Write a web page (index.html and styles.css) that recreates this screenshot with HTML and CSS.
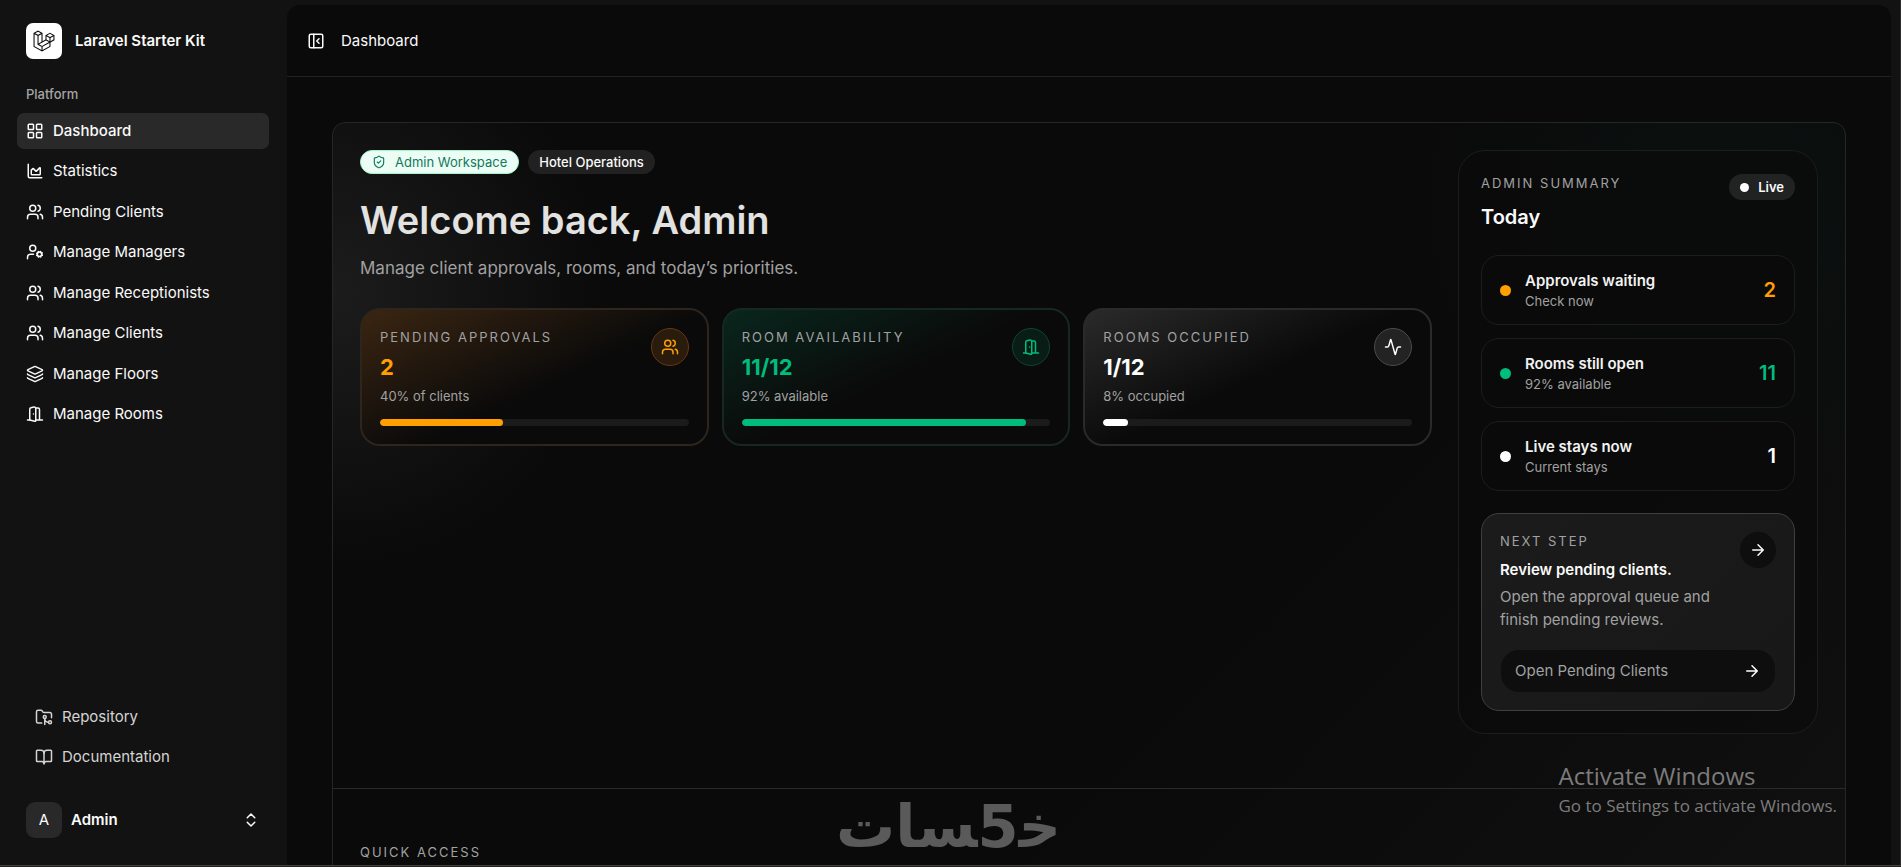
FILE: index.html
```html
<!DOCTYPE html>
<html lang="en">
<head>
<meta charset="utf-8">
<meta name="viewport" content="width=device-width, initial-scale=1">
<title>Dashboard - Laravel Starter Kit</title>
<link rel="stylesheet" href="styles.css">
</head>
<body>
<svg class="sprite" aria-hidden="true">
  <symbol id="grid" viewBox="0 0 24 24"><rect x="3" y="3" width="7" height="7" rx="1"/><rect x="14" y="3" width="7" height="7" rx="1"/><rect x="14" y="14" width="7" height="7" rx="1"/><rect x="3" y="14" width="7" height="7" rx="1"/></symbol>
  <symbol id="chart" viewBox="0 0 24 24"><path d="M3 3v16a2 2 0 0 0 2 2h16"/><path d="M7 11.207a.5.5 0 0 1 .146-.353l2-2a.5.5 0 0 1 .708 0l3.292 3.292a.5.5 0 0 0 .708 0l4.292-4.292a.5.5 0 0 1 .854.353V16a1 1 0 0 1-1 1H8a1 1 0 0 1-1-1z"/></symbol>
  <symbol id="users" viewBox="0 0 24 24"><path d="M16 21v-2a4 4 0 0 0-4-4H6a4 4 0 0 0-4 4v2"/><circle cx="9" cy="7" r="4"/><path d="M22 21v-2a4 4 0 0 0-3-3.87"/><path d="M16 3.13a4 4 0 0 1 0 7.75"/></symbol>
  <symbol id="user-cog" viewBox="0 0 24 24"><circle cx="18" cy="15" r="3"/><circle cx="9" cy="7" r="4"/><path d="M10 15H6a4 4 0 0 0-4 4v2"/><path d="m21.7 16.4-.9-.3M15.2 13.9l-.9-.3M16.6 18.7l.3-.9M19.1 12.2l.3-.9M19.6 18.7l-.4-1M16.8 12.3l-.4-1M14.3 16.6l1-.4M20.7 13.8l1-.4"/></symbol>
  <symbol id="layers" viewBox="0 0 24 24"><path d="M12.83 2.18a2 2 0 0 0-1.66 0L2.6 6.08a1 1 0 0 0 0 1.83l8.58 3.91a2 2 0 0 0 1.66 0l8.58-3.9a1 1 0 0 0 0-1.83z"/><path d="M2 12a1 1 0 0 0 .58.91l8.6 3.91a2 2 0 0 0 1.65 0l8.58-3.9A1 1 0 0 0 22 12"/><path d="M2 17a1 1 0 0 0 .58.91l8.6 3.91a2 2 0 0 0 1.65 0l8.58-3.9A1 1 0 0 0 22 17"/></symbol>
  <symbol id="door" viewBox="0 0 24 24"><path d="M13 4h3a2 2 0 0 1 2 2v14M2 20h3M13 20h9M10 12v.01"/><path d="M13 4.562v16.157a1 1 0 0 1-1.242.97L5 20V5.562a2 2 0 0 1 1.515-1.94l4-1A2 2 0 0 1 13 4.561Z"/></symbol>
  <symbol id="repo" viewBox="0 0 24 24"><path d="M9 20H4a2 2 0 0 1-2-2V5a2 2 0 0 1 2-2h3.9a2 2 0 0 1 1.69.9l.81 1.2a2 2 0 0 0 1.67.9H20a2 2 0 0 1 2 2v5"/><circle cx="13" cy="12" r="2"/><path d="M18 19c-2.8 0-5-2.2-5-5v8"/><circle cx="20" cy="19" r="2"/></symbol>
  <symbol id="book" viewBox="0 0 24 24"><path d="M12 7v14"/><path d="M3 18a1 1 0 0 1-1-1V4a1 1 0 0 1 1-1h5a4 4 0 0 1 4 4 4 4 0 0 1 4-4h5a1 1 0 0 1 1 1v13a1 1 0 0 1-1 1h-6a3 3 0 0 0-3 3 3 3 0 0 0-3-3z"/></symbol>
  <symbol id="updown" viewBox="0 0 24 24"><path d="m7 15 5 5 5-5M7 9l5-5 5 5"/></symbol>
  <symbol id="panel" viewBox="0 0 24 24"><rect x="3" y="3" width="18" height="18" rx="2"/><path d="M9 3v18M16 15l-3-3 3-3"/></symbol>
  <symbol id="arrow" viewBox="0 0 24 24"><path d="M5 12h14M12 5l7 7-7 7"/></symbol>
  <symbol id="activity" viewBox="0 0 24 24"><path d="M22 12h-2.48a2 2 0 0 0-1.93 1.46l-2.35 8.36a.25.25 0 0 1-.48 0L9.24 2.18a.25.25 0 0 0-.48 0l-2.35 8.36A2 2 0 0 1 4.49 12H2"/></symbol>
  <symbol id="shield" viewBox="0 0 24 24"><path d="M20 13c0 5-3.5 7.5-7.66 8.95a1 1 0 0 1-.67-.01C7.5 20.5 4 18 4 13V6a1 1 0 0 1 1-1c2 0 4.500-1.200 6.240-2.720a1.170 1.170 0 0 1 1.520 0C14.510 3.810 17 5 19 5a1 1 0 0 1 1 1z"/><path d="m9 12 2 2 4-4"/></symbol>
</svg>

<div class="app">
  <aside class="sidebar">
    <a class="brand" href="#">
      <span class="brand-mark"><svg viewBox="0 0 40 42" aria-hidden="true"><path fill="currentColor" fill-rule="evenodd" d="M17.2 5.633 8.6.855 0 5.633v26.51l16.2 9 16.2-9v-8.444l7.6-4.222V9.856l-8.6-4.778-8.6 4.778V18.300l-5.600 3.111V5.633ZM38 18.300l-5.600 3.111v-6.157L38 12.143V18.300Zm-1.059-7.856-5.541 3.078-5.541-3.078 5.541-3.078 5.541 3.078ZM24.800 18.300v-6.157l5.600 3.111v6.157l-5.600-3.111Zm-1 1.732 5.541 3.078-13.141 7.301-5.541-3.078 13.141-7.301ZM7.600 27.921l7.600 4.222V38.300L2 30.967V7.921l5.600 3.111v16.889ZM8.600 9.300 3.059 6.222 8.600 3.143l5.541 3.079L8.600 9.300Zm21.800 15.510-13.200 7.333V38.300l13.200-7.333V24.810ZM9.600 11.032l5.600-3.111v14.601l-5.600 3.111V11.032Z"/></svg></span>
      <span class="brand-name">Laravel Starter Kit</span>
    </a>
    <h2 class="group-title">Platform</h2>
    <nav class="nav" aria-label="Platform">
      <a class="nav-link active" href="#"><svg class="icon"><use href="#grid"/></svg>Dashboard</a>
      <a class="nav-link" href="#"><svg class="icon"><use href="#chart"/></svg>Statistics</a>
      <a class="nav-link" href="#"><svg class="icon"><use href="#users"/></svg>Pending Clients</a>
      <a class="nav-link" href="#"><svg class="icon"><use href="#user-cog"/></svg>Manage Managers</a>
      <a class="nav-link" href="#"><svg class="icon"><use href="#users"/></svg>Manage Receptionists</a>
      <a class="nav-link" href="#"><svg class="icon"><use href="#users"/></svg>Manage Clients</a>
      <a class="nav-link" href="#"><svg class="icon"><use href="#layers"/></svg>Manage Floors</a>
      <a class="nav-link" href="#"><svg class="icon"><use href="#door"/></svg>Manage Rooms</a>
    </nav>
    <nav class="nav-footer" aria-label="Resources">
      <a class="nav-link" href="#"><svg class="icon"><use href="#repo"/></svg>Repository</a>
      <a class="nav-link" href="#"><svg class="icon"><use href="#book"/></svg>Documentation</a>
    </nav>
    <button class="account" type="button">
      <span class="avatar">A</span>
      <span class="account-name">Admin</span>
      <svg class="icon"><use href="#updown"/></svg>
    </button>
  </aside>

  <main class="main">
    <header class="topbar">
      <button class="toggle" type="button" aria-label="Toggle sidebar"><svg class="icon"><use href="#panel"/></svg></button>
      <span class="crumb">Dashboard</span>
    </header>
    <div class="content">
      <div class="workspace">
        <section class="hero">
          <div class="overview">
            <div class="badges">
              <span class="badge badge-admin"><svg class="icon icon-small"><use href="#shield"/></svg>Admin Workspace</span>
              <span class="badge">Hotel Operations</span>
            </div>
            <h1 class="title">Welcome back, Admin</h1>
            <p class="subtitle">Manage client approvals, rooms, and today’s priorities.</p>
            <div class="stats">
              <article class="stat stat-amber">
                <div class="stat-head">
                  <div>
                    <h3 class="label">Pending Approvals</h3>
                    <p class="stat-value">2</p>
                  </div>
                  <span class="stat-icon"><svg class="icon"><use href="#users"/></svg></span>
                </div>
                <p class="stat-note">40% of clients</p>
                <div class="track"><div class="fill" style="width:40%"></div></div>
              </article>
              <article class="stat stat-green">
                <div class="stat-head">
                  <div>
                    <h3 class="label">Room Availability</h3>
                    <p class="stat-value">11/12</p>
                  </div>
                  <span class="stat-icon"><svg class="icon"><use href="#door"/></svg></span>
                </div>
                <p class="stat-note">92% available</p>
                <div class="track"><div class="fill" style="width:92%"></div></div>
              </article>
              <article class="stat stat-white">
                <div class="stat-head">
                  <div>
                    <h3 class="label">Rooms Occupied</h3>
                    <p class="stat-value">1/12</p>
                  </div>
                  <span class="stat-icon"><svg class="icon"><use href="#activity"/></svg></span>
                </div>
                <p class="stat-note">8% occupied</p>
                <div class="track"><div class="fill" style="width:8%"></div></div>
              </article>
            </div>
          </div>

          <aside class="summary">
            <div class="summary-head">
              <div>
                <h3 class="label">Admin Summary</h3>
                <p class="summary-title">Today</p>
              </div>
              <span class="live"><span class="live-dot"></span>Live</span>
            </div>
            <ul class="items">
              <li class="item item-amber"><span class="dot"></span><div class="item-text"><p class="item-title">Approvals waiting</p><p class="item-note">Check now</p></div><span class="item-value">2</span></li>
              <li class="item item-green"><span class="dot"></span><div class="item-text"><p class="item-title">Rooms still open</p><p class="item-note">92% available</p></div><span class="item-value">11</span></li>
              <li class="item item-white"><span class="dot"></span><div class="item-text"><p class="item-title">Live stays now</p><p class="item-note">Current stays</p></div><span class="item-value">1</span></li>
            </ul>
            <section class="next">
              <div class="next-head">
                <div>
                  <h3 class="label">Next Step</h3>
                  <p class="next-title">Review pending clients.</p>
                  <p class="next-text">Open the approval queue and finish pending reviews.</p>
                </div>
                <span class="next-icon"><svg class="icon"><use href="#arrow"/></svg></span>
              </div>
              <a class="next-link" href="#">Open Pending Clients<svg class="icon"><use href="#arrow"/></svg></a>
            </section>
          </aside>
        </section>
        <section class="quick">
          <h3 class="label">Quick Access</h3>
        </section>
      </div>
    </div>
  </main>
</div>
<div class="edge"></div>

<div class="activation">
  <p class="activation-title">Activate Windows</p>
  <p class="activation-text">Go to Settings to activate Windows.</p>
</div>
<div class="watermark" dir="rtl" lang="ar">خ&zwj;5&zwj;سات</div>
</body>
</html>
```
FILE: styles.css
```css
* { box-sizing: border-box; }

body {
  margin: 0;
  height: 100vh;
  overflow: hidden;
  display: flex;
  flex-direction: column;
  background: #121212;
  color: #fafafa;
  font: 400 15px/20px Inter, "Liberation Sans", sans-serif;
}

h1, h2, h3, p, ul { margin: 0; padding: 0; }
ul { list-style: none; }
a { color: inherit; text-decoration: none; }
button { border: 0; background: none; color: inherit; font: inherit; padding: 0; }

.sprite { display: none; }
.icon {
  width: 18px;
  height: 18px;
  flex: none;
  fill: none;
  stroke: currentColor;
  stroke-width: 2;
  stroke-linecap: round;
  stroke-linejoin: round;
}
.icon-small { width: 14px; height: 14px; }

.app {
  flex: 1;
  min-height: 0;
  display: flex;
  padding: 5px 9px 0 0;
  border-right: 1px solid #2c2c2c;
}
.edge { height: 2px; flex: none; background: #232020; border-top: 1px solid #414141; }

/* Sidebar */
.sidebar {
  width: 287px;
  flex: none;
  display: flex;
  flex-direction: column;
  padding: 18px 18px 27px 17px;
}
.brand { display: flex; align-items: center; gap: 13px; padding-left: 9px; font-weight: 600; }
.brand-mark {
  width: 36px;
  height: 36px;
  display: grid;
  place-items: center;
  border-radius: 7px;
  background: #fff;
  color: #0a0a0a;
}
.brand-mark svg { width: 22px; height: 22px; }
.group-title {
  margin: 25px 0 9px;
  padding-left: 9px;
  font-size: 13px;
  font-weight: 500;
  line-height: 20px;
  color: #a5a5a5;
}
.nav { display: flex; flex-direction: column; justify-content: space-between; min-height: 319px; }
.nav-link {
  height: 36px;
  display: flex;
  align-items: center;
  gap: 9px;
  padding: 0 9px;
  border-radius: 7px;
}
.active { background: #292929; font-weight: 500; }
.nav-footer {
  display: flex;
  flex-direction: column;
  gap: 4px;
  margin-top: auto;
  padding: 0 9px;
  color: #d4d4d4;
}
.account { display: flex; align-items: center; gap: 9px; margin-top: 27px; padding: 0 9px; text-align: left; }
.avatar {
  width: 36px;
  height: 36px;
  display: grid;
  place-items: center;
  border-radius: 9px;
  background: #292929;
}
.account-name { flex: 1; font-weight: 600; }

/* Main panel */
.main {
  flex: 1;
  min-width: 0;
  overflow: hidden;
  border-radius: 13px 13px 0 0;
  background: #0a0a0a;
}
.topbar {
  height: 72px;
  display: flex;
  align-items: center;
  gap: 16px;
  padding: 0 20px;
  border-bottom: 1px solid #222;
}
.toggle { display: flex; }
.content { padding: 45px; }
.workspace {
  overflow: hidden;
  border: 1px solid #262626;
  border-radius: 13px;
  background:
    radial-gradient(circle at 0 170px, #1c1c1c 0, #1c1c1c00 270px),
    radial-gradient(circle at 92% 80px, #0b1110 0, #0b111000 300px),
    linear-gradient(135deg, #0a0a0a 60%, #111);
}
.hero {
  display: grid;
  grid-template-columns: minmax(0, 1fr) 360px;
  align-items: start;
  gap: 26px;
  padding: 27px 27px 54px;
  border-bottom: 1px solid #2a2a2a;
}
.badges { display: flex; gap: 9px; }
.badge {
  height: 24px;
  display: flex;
  align-items: center;
  padding: 0 11px;
  border-radius: 12px;
  background: #212121;
  font-size: 13px;
  font-weight: 500;
}
.badge-admin { gap: 9px; border: 1px solid #a4f4cf; background: #ecfdf5; color: #13795b; font-weight: 400; }
.title { margin-top: 22px; font-size: 38px; line-height: 48px; font-weight: 600; color: #e2e2e0; }
.subtitle { margin-top: 10px; font-size: 17px; line-height: 28px; color: #a1a1a1; }
.label {
  font-size: 13px;
  line-height: 18px;
  font-weight: 400;
  letter-spacing: 2px;
  text-transform: uppercase;
  color: #a1a1a1;
}

.stats { display: grid; grid-template-columns: repeat(3, minmax(0, 1fr)); gap: 13px; margin-top: 26px; }
.stat { padding: 18px; border: 2px solid; border-radius: 20px; }
.stat-amber { border-color: #2e251c; color: #ff9f00; background: linear-gradient(155deg, #3c2612, #0a0a0a 55%) border-box; }
.stat-green { border-color: #172722; color: #00bc7d; background: linear-gradient(155deg, #09271e, #0a0a0a 50%) border-box; }
.stat-white { border-color: #2a2a2a; color: #fff; background: linear-gradient(155deg, #2b2b2b, #0a0a0a 50%) border-box; }
.stat-head { display: flex; justify-content: space-between; height: 50px; }
.stat-value { margin-top: 7px; font-size: 22px; line-height: 28px; font-weight: 700; }
.stat-icon {
  width: 38px;
  height: 38px;
  display: grid;
  place-items: center;
  border: 1px solid;
  border-radius: 50%;
}
.stat-amber .stat-icon { border-color: #6b3514; background: #291c0d; }
.stat-green .stat-icon { border-color: #0a4636; background: #0a1c16; }
.stat-white .stat-icon { border-color: #4b4b4b; background: #232323; }
.stat-note { margin-top: 8px; font-size: 13px; line-height: 20px; color: #a1a1a1; }
.track { height: 7px; margin-top: 13px; border-radius: 4px; overflow: hidden; background: #1b1b1b; }
.fill { height: 100%; border-radius: 4px; background: currentColor; }

/* Summary column */
.summary { padding: 23px 22px 22px; border: 1px solid #1d1d1d; border-radius: 27px; background: #0a0a0a99; }
.summary-head { display: flex; justify-content: space-between; align-items: flex-start; }
.summary-title { margin-top: 11px; font-size: 20px; line-height: 28px; font-weight: 600; }
.live {
  height: 26px;
  display: flex;
  align-items: center;
  gap: 9px;
  padding: 0 11px;
  border-radius: 13px;
  background: #212222;
  font-size: 13px;
  font-weight: 600;
}
.live-dot { width: 9px; height: 9px; border-radius: 50%; background: #fff; }
.items { display: grid; gap: 13px; margin-top: 24px; }
.item {
  display: flex;
  align-items: center;
  gap: 14px;
  padding: 14px 18px;
  border: 1px solid #1d1d1d;
  border-radius: 18px;
  background: #0a0a0a;
}
.item-amber { color: #ff9f00; }
.item-green { color: #00bc7d; }
.item-white { color: #fff; }
.dot { width: 11px; height: 11px; border-radius: 50%; background: currentColor; }
.item-text { flex: 1; }
.item-title { color: #f2f2f2; font-weight: 600; line-height: 22px; }
.item-note { color: #a1a1a1; font-size: 13px; line-height: 18px; }
.item-value { font-size: 20px; font-weight: 600; }
.next {
  margin-top: 22px;
  padding: 18px;
  border: 1px solid #3f3f3f;
  border-radius: 18px;
  background: linear-gradient(135deg, #1b1b1b, #181818);
}
.next-head { display: flex; justify-content: space-between; gap: 13px; }
.next-title { margin-top: 9px; font-weight: 600; line-height: 22px; }
.next-text { margin-top: 4px; line-height: 23px; color: #a1a1a1; }
.next-icon {
  width: 36px;
  height: 36px;
  flex: none;
  display: grid;
  place-items: center;
  border-radius: 50%;
  background: #0e0e0e;
}
.next-link {
  height: 42px;
  display: flex;
  align-items: center;
  justify-content: space-between;
  margin: 19px 1px 0;
  padding: 0 14px;
  border-radius: 18px;
  background: #0e0e0e;
  color: #a1a1a1;
}
.next-link .icon { color: #fff; }

.quick { min-height: 180px; padding: 54px 27px; }

/* Desktop overlays */
.activation {
  position: absolute;
  right: 64px;
  bottom: 47px;
  font-family: "Open Sans", "Noto Sans", sans-serif;
  color: #7c7c7c;
}
.activation-title { font-size: 24px; line-height: 32px; }
.activation-text { font-size: 17px; line-height: 28px; }
.watermark {
  position: absolute;
  left: 836px;
  bottom: 8px;
  font: 700 59px/64px "DejaVu Sans", sans-serif;
  color: #5a5a5a;
}
```
